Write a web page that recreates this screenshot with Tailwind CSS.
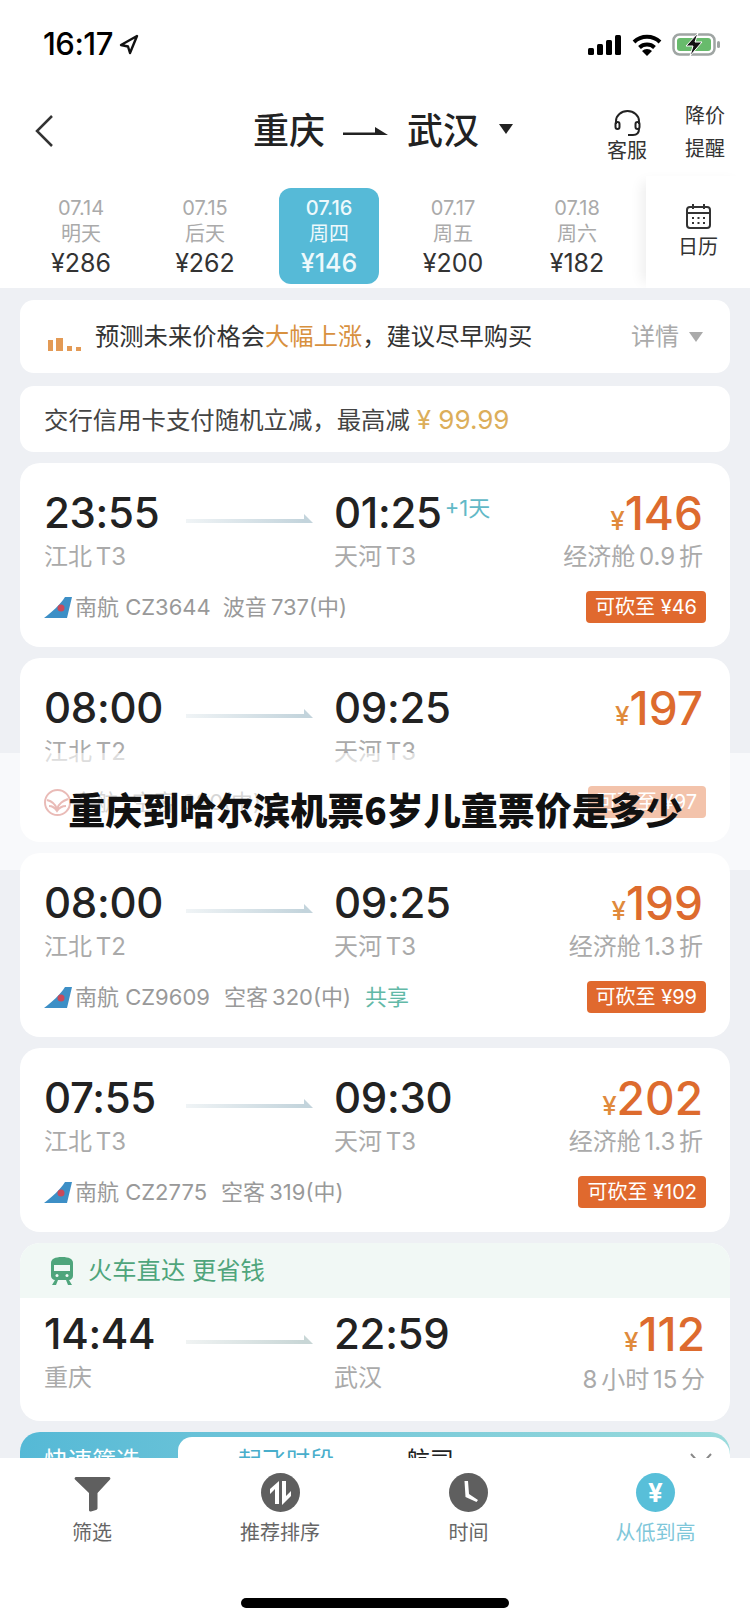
<!DOCTYPE html>
<html lang="zh-CN">
<head>
  <meta charset="UTF-8" />
  <meta name="viewport" content="width=device-width, initial-scale=1.0" />
  <title>重庆到武汉</title>
  <script src="https://cdn.jsdelivr.net/npm/@tailwindcss/browser@4"></script>
</head>
<body class="bg-white font-[Inter,'Noto_Sans_CJK_SC',sans-serif] text-[#222]">
<div class="relative w-[750px] h-[1624px] flex flex-col overflow-hidden bg-white">

  <!-- status bar -->
  <div class="h-[90px] shrink-0 flex items-center justify-between pl-[43px] pr-[29px] pb-[1px]">
    <div class="flex items-center gap-[6px]">
      <span class="text-[31px] font-medium tracking-[-0.5px] text-black">16:17</span>
      <svg class="w-[20px] h-[21px]" viewBox="0 0 20 21" fill="none" stroke="#111" stroke-width="2.4" stroke-linejoin="round"><path d="M18 2 2 11l7 1.5L11 19Z"/></svg>
    </div>
    <div class="flex items-center">
      <svg class="w-[34px] h-[20px]" viewBox="0 0 34 20" fill="#000"><rect x="0" y="13" width="6" height="7" rx="1.5"/><rect x="9" y="9" width="6" height="11" rx="1.5"/><rect x="18" y="5" width="6" height="15" rx="1.5"/><rect x="27" y="0" width="6" height="20" rx="1.5"/></svg>
      <svg class="w-[30px] h-[22px] ml-[10px]" viewBox="0 0 30 22" fill="none" stroke="#000" stroke-width="4"><path d="M2 8a19 19 0 0 1 26 0"/><path d="M7.500 13.500a11 11 0 0 1 15 0"/><path d="M15 22l-5-5a7 7 0 0 1 10 0Z" fill="#000" stroke="none"/></svg>
      <svg class="w-[49px] h-[23px] ml-[10px]" viewBox="0 0 49 23"><rect x="1.500" y="1.500" width="41" height="20" rx="6" fill="#fff" stroke="#9fa5a3" stroke-width="2.5"/><rect x="5" y="5" width="34" height="13" rx="3" fill="#68bb6c"/><rect x="45" y="8" width="3" height="7" rx="1.500" fill="#9fa5a3"/><path d="M26 0 14 13h7l-3 10 12-14h-7Z" fill="#111" stroke="#fff" stroke-width="1"/></svg>
    </div>
  </div>

  <!-- nav -->
  <div class="h-[86px] shrink-0 relative flex items-center pl-[35px] pr-[25px]">
    <svg class="w-[19px] h-[32px] mt-[-4px]" viewBox="0 0 19 32" fill="none" stroke="#333" stroke-width="2.5"><path d="M17 1 2 16l15 15"/></svg>
    <div class="ml-[199px] flex items-center mt-[-4px]">
      <span class="text-[36px] font-medium text-[#222]">重庆</span>
      <svg class="w-[45px] h-[12px] ml-[18px]" viewBox="0 0 45 12" fill="#222"><path d="M0 7.500h32V2l13 8H0Z"/></svg>
      <span class="text-[36px] font-medium text-[#222] ml-[19px]">武汉</span>
      <svg class="w-[14px] h-[10px] ml-[20px] mt-[-4px]" viewBox="0 0 14 10" fill="#222"><path d="M0 0h14L7 10Z"/></svg>
    </div>
    <div class="ml-auto flex items-start gap-[38px]">
      <div class="flex flex-col items-center w-[40px] mt-[10px]">
        <svg class="w-[27px] h-[26px]" viewBox="0 0 27 26" fill="none" stroke="#222" stroke-width="2"><path d="M2 14v-3a11.500 10 0 0 1 23 0v3"/><rect x="1.500" y="12" width="4" height="7" rx="2"/><rect x="21.500" y="12" width="4" height="7" rx="2"/><path d="M25 19c0 4-2 6-6 6h-5"/></svg>
        <span class="text-[20px] leading-[28px] mt-[1px] whitespace-nowrap text-[#333]">客服</span>
      </div>
      <div class="flex flex-col items-center w-[40px] text-[20px] text-[#333]">
        <span class="leading-[33px] whitespace-nowrap">降价</span>
        <span class="leading-[33px] whitespace-nowrap">提醒</span>
      </div>
    </div>
  </div>

  <!-- date strip -->
  <div class="h-[112px] shrink-0 flex pl-[19px]">
    <div class="w-[124px] pt-[12px]">
      <div class="w-[100px] h-[96px] mx-auto flex flex-col items-center pt-[8px]">
        <span class="text-[20px] leading-[24px] text-[#aaa]">07.14</span>
        <span class="text-[20px] leading-[28px] text-[#aaa]">明天</span>
        <span class="text-[25px] leading-[30px] text-[#333]">¥286</span>
      </div>
    </div>
    <div class="w-[124px] pt-[12px]">
      <div class="w-[100px] h-[96px] mx-auto flex flex-col items-center pt-[8px]">
        <span class="text-[20px] leading-[24px] text-[#aaa]">07.15</span>
        <span class="text-[20px] leading-[28px] text-[#aaa]">后天</span>
        <span class="text-[25px] leading-[30px] text-[#333]">¥262</span>
      </div>
    </div>
    <div class="w-[124px] pt-[12px]">
      <div class="w-[100px] h-[96px] mx-auto flex flex-col items-center pt-[8px] rounded-[12px] bg-[#56bad7] text-[#eef9fc]">
        <span class="text-[20px] leading-[24px] font-medium">07.16</span>
        <span class="text-[20px] leading-[28px]">周四</span>
        <span class="text-[25px] leading-[30px] font-medium">¥146</span>
      </div>
    </div>
    <div class="w-[124px] pt-[12px]">
      <div class="w-[100px] h-[96px] mx-auto flex flex-col items-center pt-[8px]">
        <span class="text-[20px] leading-[24px] text-[#aaa]">07.17</span>
        <span class="text-[20px] leading-[28px] text-[#aaa]">周五</span>
        <span class="text-[25px] leading-[30px] text-[#333]">¥200</span>
      </div>
    </div>
    <div class="w-[124px] pt-[12px]">
      <div class="w-[100px] h-[96px] mx-auto flex flex-col items-center pt-[8px]">
        <span class="text-[20px] leading-[24px] text-[#aaa]">07.18</span>
        <span class="text-[20px] leading-[28px] text-[#aaa]">周六</span>
        <span class="text-[25px] leading-[30px] text-[#333]">¥182</span>
      </div>
    </div>
    <div class="w-[104px] ml-[7px] flex flex-col items-center pt-[28px] shadow-[-10px_0_12px_-6px_rgba(0,0,0,0.07)]">
      <svg class="w-[25px] h-[25px]" viewBox="0 0 25 25" fill="none" stroke="#333" stroke-width="2"><rect x="1" y="3" width="23" height="21" rx="3"/><path d="M1 9h23M7 0v5M18 0v5"/><path d="M6 14h2M11.500 14h2M17 14h2M6 19h2M11.500 19h2M17 19h2" stroke-width="2"/></svg>
      <span class="text-[20px] leading-[28px] mt-[4px] text-[#333]">日历</span>
    </div>
  </div>

  <!-- flights -->
  <main class="flex-1 min-h-0 overflow-hidden bg-[#eef0f4] px-5 pt-3 flex flex-col gap-[11px]">

    <div class="shrink-0 h-[73px] mb-[2px] rounded-[14px] bg-white flex items-center pl-[28px] pr-[27px]">
      <div class="flex items-end gap-[3px] w-[33px] h-[14px] mt-[14px]">
        <span class="w-[5px] h-[11px] bg-[#e39a55]"></span>
        <span class="w-[7px] h-[13px] bg-[#e39a55]"></span>
        <span class="w-[5px] h-[5px] ml-[1px] bg-[#e39a55]"></span>
        <span class="w-[5px] h-[4px] ml-[1px] bg-[#e39a55]"></span>
      </div>
      <p class="ml-[14px] text-[24.3px] text-[#333]">预测未来价格会<span class="text-[#d8913f]">大幅上涨</span>，建议尽早购买</p>
      <span class="ml-auto text-[24px] text-[#aaa]">详情</span>
      <svg class="w-[14px] h-[10px] ml-[10px]" viewBox="0 0 14 10" fill="#aaa"><path d="M0 0h14L7 10Z"/></svg>
    </div>

    <div class="shrink-0 h-[66px] rounded-[14px] bg-white flex items-center pl-6">
      <p class="text-[24.4px] text-[#444]">交行信用卡支付随机立减，最高减 <span class="text-[26px] text-[#dcae5a]">¥ 99.99</span></p>
    </div>

    <!-- flight 1 -->
    <div class="shrink-0 h-[184px] rounded-[20px] bg-white pt-[28px] pl-6 pr-[27px]">
      <div class="grid grid-cols-[142px_148px_1fr_auto] grid-rows-[44px_44px] items-center">
        <span class="text-[42px] font-medium leading-none tracking-[-0.3px]">23:55</span>
        <div class="w-[127px] mt-[10px] flex items-end"><div class="flex-1 h-[4px] bg-linear-to-r from-[#f0f4f6] to-[#c3d4dc]"></div><svg class="w-[9px] h-[9px]" viewBox="0 0 9 9" fill="#c3d4dc"><path d="M0 0l9 9H0Z"/></svg></div>
        <div class="flex items-start">
          <span class="text-[42px] font-medium leading-none tracking-[-0.3px]">01:25</span>
          <span class="text-[22px] leading-none ml-[3px] mt-[5px] text-[#62b9c7]">+1天</span>
        </div>
        <div class="text-right text-[#dd6b2e] font-medium leading-none"><span class="text-[26px] text-[#e08a3c]">¥</span><span class="text-[46px]">146</span></div>
        <span class="text-[24px] text-[#aaa] [word-spacing:-3px]">江北 T3</span>
        <span></span>
        <span class="text-[24px] text-[#aaa] [word-spacing:-3px]">天河 T3</span>
        <span class="text-[24px] text-[#aaa] text-right whitespace-nowrap [word-spacing:-3px]">经济舱 0.9 折</span>
      </div>
      <div class="flex items-center h-[32px] mt-[12px]">
        <svg class="w-[28px] h-[21px]" viewBox="0 0 28 21"><path d="M21 0h7l-5 21H0C8 15 16 8 21 0Z" fill="#3d8fc6"/><circle cx="17" cy="11" r="3.500" fill="#c9495a"/></svg>
        <span class="ml-[3px] text-[22px] text-[#999]">南航 CZ3644</span>
        <span class="ml-[12px] text-[22px] text-[#999] [word-spacing:-2px]">波音 737(中)</span>
        <span class="ml-auto mr-[-3px] h-[32px] px-[9px] flex items-center rounded-[4px] bg-[#e0692e] text-white text-[20px]">可砍至 ¥46</span>
      </div>
    </div>

    <!-- flight 2 -->
    <div class="shrink-0 h-[184px] rounded-[20px] bg-white pt-[28px] pl-6 pr-[27px]">
      <div class="grid grid-cols-[142px_148px_1fr_auto] grid-rows-[44px_44px] items-center">
        <span class="text-[42px] font-medium leading-none tracking-[-0.3px]">08:00</span>
        <div class="w-[127px] mt-[10px] flex items-end"><div class="flex-1 h-[4px] bg-linear-to-r from-[#f0f4f6] to-[#c3d4dc]"></div><svg class="w-[9px] h-[9px]" viewBox="0 0 9 9" fill="#c3d4dc"><path d="M0 0l9 9H0Z"/></svg></div>
        <span class="text-[42px] font-medium leading-none tracking-[-0.3px]">09:25</span>
        <div class="text-right text-[#dd6b2e] font-medium leading-none"><span class="text-[26px] text-[#e08a3c]">¥</span><span class="text-[46px]">197</span></div>
        <span class="text-[24px] text-[#aaa] [word-spacing:-3px]">江北 T2</span>
        <span></span>
        <span class="text-[24px] text-[#aaa] [word-spacing:-3px]">天河 T3</span>
        <span></span>
      </div>
      <div class="flex items-center h-[32px] mt-[12px]">
        <svg class="w-[27px] h-[27px]" viewBox="0 0 27 27" fill="none" stroke="#c9564c" stroke-width="2"><circle cx="13.500" cy="13.500" r="12.500"/><path d="M3 11c4 1 8 3 10 9 2-6 6-8 11-10M5 17c3 0 6 2 8 5 2-3 5-5 9-5"/></svg>
        <span class="ml-[3px] text-[22px] text-[#999]">东航</span>
        <span class="ml-[14px] text-[22px] text-[#999]">空客 320(中)</span>
        <span class="ml-auto mr-[-3px] h-[32px] px-[9px] flex items-center rounded-[4px] bg-[#e0692e] text-white text-[20px]">可砍至 ¥97</span>
      </div>
    </div>

    <!-- flight 3 -->
    <div class="shrink-0 h-[184px] rounded-[20px] bg-white pt-[28px] pl-6 pr-[27px]">
      <div class="grid grid-cols-[142px_148px_1fr_auto] grid-rows-[44px_44px] items-center">
        <span class="text-[42px] font-medium leading-none tracking-[-0.3px]">08:00</span>
        <div class="w-[127px] mt-[10px] flex items-end"><div class="flex-1 h-[4px] bg-linear-to-r from-[#f0f4f6] to-[#c3d4dc]"></div><svg class="w-[9px] h-[9px]" viewBox="0 0 9 9" fill="#c3d4dc"><path d="M0 0l9 9H0Z"/></svg></div>
        <span class="text-[42px] font-medium leading-none tracking-[-0.3px]">09:25</span>
        <div class="text-right text-[#dd6b2e] font-medium leading-none"><span class="text-[26px] text-[#e08a3c]">¥</span><span class="text-[46px]">199</span></div>
        <span class="text-[24px] text-[#aaa] [word-spacing:-3px]">江北 T2</span>
        <span></span>
        <span class="text-[24px] text-[#aaa] [word-spacing:-3px]">天河 T3</span>
        <span class="text-[24px] text-[#aaa] text-right whitespace-nowrap [word-spacing:-3px]">经济舱 1.3 折</span>
      </div>
      <div class="flex items-center h-[32px] mt-[12px]">
        <svg class="w-[28px] h-[21px]" viewBox="0 0 28 21"><path d="M21 0h7l-5 21H0C8 15 16 8 21 0Z" fill="#3d8fc6"/><circle cx="17" cy="11" r="3.500" fill="#c9495a"/></svg>
        <span class="ml-[3px] text-[22px] text-[#999]">南航 CZ9609</span>
        <span class="ml-[14px] text-[22px] text-[#999] [word-spacing:-2px]">空客 320(中)</span>
        <span class="ml-[14px] text-[22px] text-[#62b9a7]">共享</span>
        <span class="ml-auto mr-[-3px] h-[32px] px-[9px] flex items-center rounded-[4px] bg-[#e0692e] text-white text-[20px]">可砍至 ¥99</span>
      </div>
    </div>

    <!-- flight 4 -->
    <div class="shrink-0 h-[184px] rounded-[20px] bg-white pt-[28px] pl-6 pr-[27px]">
      <div class="grid grid-cols-[142px_148px_1fr_auto] grid-rows-[44px_44px] items-center">
        <span class="text-[42px] font-medium leading-none tracking-[-0.3px]">07:55</span>
        <div class="w-[127px] mt-[10px] flex items-end"><div class="flex-1 h-[4px] bg-linear-to-r from-[#f0f4f6] to-[#c3d4dc]"></div><svg class="w-[9px] h-[9px]" viewBox="0 0 9 9" fill="#c3d4dc"><path d="M0 0l9 9H0Z"/></svg></div>
        <span class="text-[42px] font-medium leading-none tracking-[-0.3px]">09:30</span>
        <div class="text-right text-[#dd6b2e] font-medium leading-none"><span class="text-[26px] text-[#e08a3c]">¥</span><span class="text-[46px]">202</span></div>
        <span class="text-[24px] text-[#aaa] [word-spacing:-3px]">江北 T3</span>
        <span></span>
        <span class="text-[24px] text-[#aaa] [word-spacing:-3px]">天河 T3</span>
        <span class="text-[24px] text-[#aaa] text-right whitespace-nowrap [word-spacing:-3px]">经济舱 1.3 折</span>
      </div>
      <div class="flex items-center h-[32px] mt-[12px]">
        <svg class="w-[28px] h-[21px]" viewBox="0 0 28 21"><path d="M21 0h7l-5 21H0C8 15 16 8 21 0Z" fill="#3d8fc6"/><circle cx="17" cy="11" r="3.500" fill="#c9495a"/></svg>
        <span class="ml-[3px] text-[22px] text-[#999]">南航 CZ2775</span>
        <span class="ml-[14px] text-[22px] text-[#999] [word-spacing:-2px]">空客 319(中)</span>
        <span class="ml-auto mr-[-3px] h-[32px] px-[9px] flex items-center rounded-[4px] bg-[#e0692e] text-white text-[20px]">可砍至 ¥102</span>
      </div>
    </div>

    <!-- train -->
    <div class="shrink-0 h-[178px] rounded-[20px] bg-white overflow-hidden">
      <div class="h-[55px] bg-[#f1f8f5] flex items-center pl-[30px] text-[#4fa57c]">
        <svg class="w-[24px] h-[28px]" viewBox="0 0 24 28" fill="#4fa57c"><path d="M12 0c7 0 11 2 11 6v13c0 2-2 4-4 4H5c-2 0-4-2-4-4V6c0-4 4-6 11-6Z"/><rect x="4" y="8" width="16" height="6" fill="#f1f8f5"/><circle cx="7" cy="18.500" r="1.500" fill="#f1f8f5"/><circle cx="17" cy="18.500" r="1.500" fill="#f1f8f5"/><path d="M5 23h3l-2 5H2ZM19 23h-3l2 5h4Z"/></svg>
        <span class="ml-[14px] text-[24.3px] whitespace-nowrap">火车直达 更省钱</span>
      </div>
      <div class="pt-[14px] pl-6 pr-[25px]">
        <div class="grid grid-cols-[142px_148px_1fr_auto] grid-rows-[44px_44px] items-center">
          <span class="text-[42px] font-medium leading-none tracking-[-0.3px]">14:44</span>
          <div class="w-[127px] mt-[10px] flex items-end"><div class="flex-1 h-[4px] bg-linear-to-r from-[#f0f3f3] to-[#c8d6d6]"></div><svg class="w-[9px] h-[9px]" viewBox="0 0 9 9" fill="#c8d6d6"><path d="M0 0l9 9H0Z"/></svg></div>
          <span class="text-[42px] font-medium leading-none tracking-[-0.3px]">22:59</span>
          <div class="text-right text-[#dd6b2e] font-medium leading-none"><span class="text-[26px] text-[#e08a3c]">¥</span><span class="text-[46px]">112</span></div>
          <span class="text-[24px] text-[#aaa]">重庆</span>
          <span></span>
          <span class="text-[24px] text-[#aaa]">武汉</span>
          <span class="text-[24px] text-[#aaa] text-right whitespace-nowrap mt-[4px] [word-spacing:-3px]">8 小时 15 分</span>
        </div>
      </div>
    </div>

    <!-- quick filter, cut off by the bottom bar -->
    <div class="shrink-0 h-[60px] pt-[5px] rounded-t-[20px] bg-linear-to-r from-[#55b9d6] to-[#9adbdc] flex">
      <div class="w-[158px] pl-6 pt-[10px] text-[24px] leading-[28px] text-white whitespace-nowrap">快速筛选</div>
      <div class="flex-1 bg-white rounded-tl-[14px] rounded-tr-[18px] flex pt-[10px] text-[24px] leading-[28px]">
        <span class="ml-[60px] text-[#48aecb] whitespace-nowrap">起飞时段</span>
        <span class="ml-[72px] text-[#222] whitespace-nowrap">航司</span>
        <svg class="w-[22px] h-[14px] ml-auto mr-[18px] mt-[6px]" viewBox="0 0 22 14" fill="none" stroke="#888" stroke-width="2"><path d="M1 1l10 11L21 1"/></svg>
      </div>
    </div>
  </main>

  <!-- bottom bar -->
  <div class="h-[166px] shrink-0 bg-white flex flex-col pt-[15px]">
    <div class="grid grid-cols-[184px_192px_185px_189px]">
      <div class="flex flex-col items-center">
        <svg class="w-[39px] h-[39px]" viewBox="0 0 39 39" fill="#5f5f5f"><path d="M3 4h33a1.500 1.500 0 0 1 1 2.500L24.500 20v15.500a2 2 0 0 1-1.500 1.500l-5 1.500a1.500 1.500 0 0 1-2-1.500V20L2 6.500A1.500 1.500 0 0 1 3 4Z"/></svg>
        <span class="mt-[7px] text-[20px] leading-[28px] text-[#666]">筛选</span>
      </div>
      <div class="flex flex-col items-center">
        <svg class="w-[39px] h-[39px]" viewBox="0 0 39 39"><circle cx="19.500" cy="19.500" r="19.500" fill="#5f5f5f"/><path d="M18 8v23h-4V16l-5 5v-5ZM21 8h4v15l5-5v5l-9 9Z" fill="#fff"/></svg>
        <span class="mt-[7px] text-[20px] leading-[28px] text-[#666]">推荐排序</span>
      </div>
      <div class="flex flex-col items-center">
        <svg class="w-[39px] h-[39px]" viewBox="0 0 39 39"><circle cx="19.500" cy="19.500" r="19.500" fill="#5f5f5f"/><path d="M15.500 8h3.500l1 13 9 6-1.500 2-11-5Z" fill="#fff"/></svg>
        <span class="mt-[7px] text-[20px] leading-[28px] text-[#666]">时间</span>
      </div>
      <div class="flex flex-col items-center">
        <div class="w-[39px] h-[39px] rounded-full bg-[#58bfd9] flex items-center justify-center text-white text-[26px] font-bold leading-none">¥</div>
        <span class="mt-[7px] text-[20px] leading-[28px] text-[#7fc7da]">从低到高</span>
      </div>
    </div>
    <div class="mt-auto mb-[16px] self-center w-[268px] h-[10px] rounded-full bg-black"></div>
  </div>

  <!-- watermark over the list -->
  <div class="absolute left-0 right-0 top-[753px] h-[117px] bg-white/60 flex items-center justify-center pb-[3px]">
    <span class="ml-[1px] font-['Noto_Sans_CJK_SC',sans-serif] text-[37px] font-black text-[#111] whitespace-nowrap">重庆到哈尔滨机票6岁儿童票价是多少</span>
  </div>
</div>
</body>
</html>
